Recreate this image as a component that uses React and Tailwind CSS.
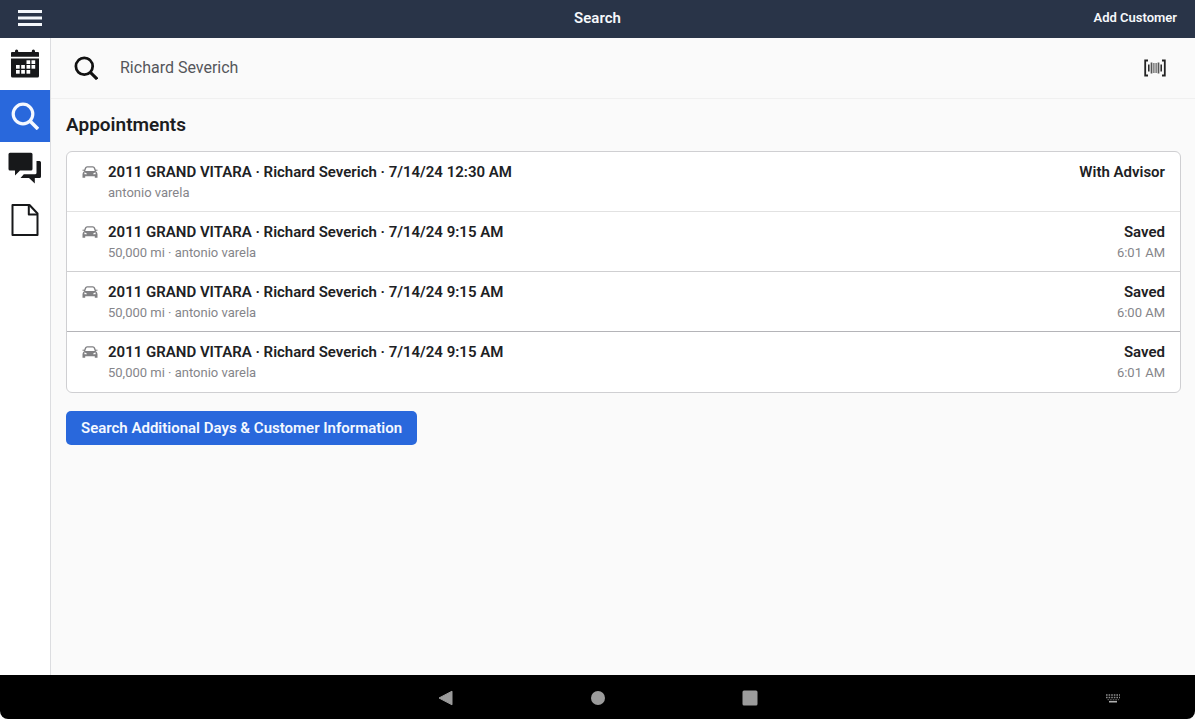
const APPOINTMENTS = [
  { id: 1, title: '2011 GRAND VITARA · Richard Severich · 7/14/24 12:30 AM', detail: 'antonio varela', status: 'With Advisor', time: '', line: 'border-[#e2e2e2]' },
  { id: 2, title: '2011 GRAND VITARA · Richard Severich · 7/14/24 9:15 AM', detail: '50,000 mi · antonio varela', status: 'Saved', time: '6:01 AM', line: 'border-[#cfcfd1]' },
  { id: 3, title: '2011 GRAND VITARA · Richard Severich · 7/14/24 9:15 AM', detail: '50,000 mi · antonio varela', status: 'Saved', time: '6:00 AM', line: 'border-[#b4b4b8]' },
  { id: 4, title: '2011 GRAND VITARA · Richard Severich · 7/14/24 9:15 AM', detail: '50,000 mi · antonio varela', status: 'Saved', time: '6:01 AM', line: 'border-transparent' },
];

function MenuIcon() {
  return (
    <svg viewBox="0 0 24 18" className="h-[18px] w-6" fill="#f4f7fb" aria-hidden="true">
      <rect x="0" y="1" width="24" height="3" />
      <rect x="0" y="7.5" width="24" height="3" />
      <rect x="0" y="14" width="24" height="3" />
    </svg>
  );
}

function CalendarIcon() {
  return (
    <svg viewBox="0 0 30 30" className="size-[30px]" fill="#17181a" aria-hidden="true">
      <path d="M2 3H5V2.2a1.600 1.600 0 0 1 3.200 0V3H21.800V2.200a1.600 1.600 0 0 1 3.200 0V3H28A1 1 0 0 1 29 4V7.800H1V4A1 1 0 0 1 2 3Z" />
      <path d="M1 9.500H29V27a1.500 1.500 0 0 1-1.500 1.500h-25A1.500 1.500 0 0 1 1 27Z" />
      <g fill="#fff">
        <rect x="16.500" y="11.300" width="3.700" height="3.700" />
        <rect x="21.500" y="11.300" width="3.700" height="3.700" />
        <rect x="6" y="16" width="3.700" height="3.700" />
        <rect x="11.200" y="16" width="3.700" height="3.700" />
        <rect x="16.500" y="16" width="3.700" height="3.700" />
        <rect x="21.500" y="16" width="3.700" height="3.700" />
        <rect x="6" y="21" width="3.700" height="3.700" />
        <rect x="11.200" y="21" width="3.700" height="3.700" />
        <rect x="16.500" y="21" width="3.700" height="3.700" />
      </g>
    </svg>
  );
}

function SearchIcon({ className }) {
  return (
    <svg viewBox="0 0 28 28" className={className} fill="none" stroke="currentColor" strokeWidth="3.200" aria-hidden="true">
      <circle cx="12" cy="12" r="9.800" />
      <path d="M18.500 18.500L27 27" strokeWidth="3.600" />
    </svg>
  );
}

function ChatIcon() {
  return (
    <svg viewBox="0 0 34 32" className="h-8 w-[34px]" fill="#17181a" aria-hidden="true">
      <path d="M2 0.800H23A1.500 1.500 0 0 1 24.500 2.300V17A1.500 1.500 0 0 1 23 18.500H12L7 23.500V18.500H2A1.500 1.500 0 0 1 .500 17V2.300A1.500 1.500 0 0 1 2 .800Z" />
      <path d="M28.500 9H31.500A1.500 1.500 0 0 1 33 10.500V24.500A1.500 1.500 0 0 1 31.500 26H26.800V31.500L21 26H12.500L15.800 22.300H27A1.500 1.500 0 0 0 28.500 20.800Z" />
    </svg>
  );
}

function DocumentIcon() {
  return (
    <svg viewBox="0 0 28 32" className="h-8 w-7" fill="none" stroke="#17181a" strokeWidth="2" strokeLinejoin="round" aria-hidden="true">
      <path d="M1.500 1H18.500L26.500 9.500V31H1.500Z" />
      <path d="M17.800 1V10.500H26.500" />
    </svg>
  );
}

function CarIcon() {
  return (
    <svg viewBox="0 0 16 14" className="h-3.5 w-4 shrink-0" fill="#808083" aria-hidden="true">
      <path d="M2.300 6.500L3.600 3Q4 1.900 5.200 1.900H10.800Q12 1.900 12.400 3L13.700 6.500" fill="none" stroke="#808083" strokeWidth="1.400" />
      <path d="M0.500 5.200H2.500M13.500 5.200H15.500" stroke="#808083" strokeWidth="1" />
      <path fillRule="evenodd" d="M2.800 6H13.200Q15.500 7 15.500 9V12.800H12.800V11.300H3.200V12.800H0.500V9Q0.500 7 2.800 6ZM2.400 7.600V9.200H5L4.200 8ZM13.600 7.600V9.200H11L11.800 8Z" />
    </svg>
  );
}

function BarcodeIcon() {
  return (
    <svg viewBox="0 0 22 18" className="h-[18px] w-[22px]" fill="none" stroke="#242424" aria-hidden="true">
      <path d="M4 1.500H1.200V16.500H4M18 1.500H20.800V16.500H18" strokeWidth="1.800" />
      <path d="M4.800 5.500V12.500M17.200 5.500V12.500" strokeWidth="1.500" />
      <path d="M7.500 3.500V14.500M14.500 3.500V14.500" strokeWidth="1.700" stroke="#555" />
      <path d="M9.800 4V14M12.200 4V14" strokeWidth="1.800" stroke="#8a8a8a" />
    </svg>
  );
}

function KeyboardIcon() {
  return (
    <svg viewBox="0 0 16 12" className="h-3 w-4" fill="none" stroke="#8c8c8c" aria-hidden="true">
      <path d="M1 3H15M1 5.500H15" strokeWidth="1.400" strokeDasharray="1.600 1" />
      <path d="M2.500 7.700H14" strokeWidth="1" strokeDasharray="1.600 1" stroke="#666" />
      <path d="M4 9.700H12" strokeWidth="1.600" stroke="#b0b0b0" />
    </svg>
  );
}

function SideButton({ label, active, children }) {
  return (
    <button
      type="button"
      aria-label={label}
      className={`flex h-[52px] w-full items-center justify-center ${active ? 'bg-[#2968dc] text-[#f4f8ff]' : ''}`}
    >
      {children}
    </button>
  );
}

function AppointmentRow({ item }) {
  return (
    <li className={`flex items-start gap-2.5 border-b pt-2.5 pr-[15px] pb-2 pl-[15px] ${item.line}`}>
      <span className="flex h-5 items-center">
        <CarIcon />
      </span>
      <div className="flex min-w-0 grow flex-col gap-px leading-5">
        <p className="text-[15px] font-semibold text-[#202124]">{item.title}</p>
        <p className="text-[13px] text-[#85858a]">{item.detail}</p>
      </div>
      <div className="flex flex-col gap-px text-right leading-5">
        <p className="text-[15px] font-semibold text-[#202124]">{item.status}</p>
        <p className="text-[13px] text-[#85858a]">{item.time}</p>
      </div>
    </li>
  );
}

export default function App() {
  return (
    <div className="flex min-h-screen flex-col bg-[#fafafa] font-['Roboto',sans-serif]">
      <header className="grid h-[38px] grid-cols-3 items-center bg-[#293448] px-[18px] pb-0.5 text-[#f6f8fb]">
        <button type="button" aria-label="Menu" className="justify-self-start">
          <MenuIcon />
        </button>
        <h1 className="text-center text-[15px] font-semibold">Search</h1>
        <button type="button" className="justify-self-end text-[13px] font-semibold">Add Customer</button>
      </header>

      <div className="flex grow">
        <nav className="w-[51px] shrink-0 border-r border-[#dcdde0] bg-white">
          <SideButton label="Calendar"><CalendarIcon /></SideButton>
          <SideButton label="Search" active><SearchIcon className="size-7" /></SideButton>
          <SideButton label="Messages"><ChatIcon /></SideButton>
          <SideButton label="Documents"><DocumentIcon /></SideButton>
        </nav>

        <main className="min-w-0 grow">
          <div className="flex h-[61px] items-center gap-[22px] border-b border-[#f0f0f0] pr-[29px] pl-[23px]">
            <SearchIcon className="size-6 shrink-0 text-[#111]" />
            <input
              type="text"
              aria-label="Search customers"
              defaultValue="Richard Severich"
              className="min-w-0 grow bg-transparent text-base text-[#55565a] outline-none"
            />
            <button type="button" aria-label="Scan barcode">
              <BarcodeIcon />
            </button>
          </div>

          <section className="pt-3 pr-3.5 pl-[15px]">
            <h2 className="text-[19px] leading-7 font-semibold text-[#1c1d1f]">Appointments</h2>
            <ul className="mt-3 rounded-md border border-[#cfcfd2] bg-white">
              {APPOINTMENTS.map((item) => (
                <AppointmentRow key={item.id} item={item} />
              ))}
            </ul>
            <button type="button" className="mt-[18px] h-[34px] rounded-[5px] bg-[#2968dc] px-[15px] text-[15px] font-semibold text-[#f4f8ff]">
              Search Additional Days &amp; Customer Information
            </button>
          </section>
        </main>
      </div>

      <footer className="grid h-11 grid-cols-[1fr_auto_1fr] items-center rounded-b-lg bg-black pt-0.5">
        <span />
        <div className="flex items-center gap-[136px]">
          <button type="button" aria-label="Back">
            <svg viewBox="0 0 16 16" className="size-4" fill="#9b9b9b" aria-hidden="true"><path d="M14 1.200V14.800L1 8Z" stroke="#9b9b9b" strokeLinejoin="round" /></svg>
          </button>
          <button type="button" aria-label="Home">
            <svg viewBox="0 0 16 16" className="size-4" fill="#9b9b9b" aria-hidden="true"><circle cx="8" cy="8" r="7" /></svg>
          </button>
          <button type="button" aria-label="Recent apps">
            <svg viewBox="0 0 16 16" className="size-4" fill="#9b9b9b" aria-hidden="true"><rect x="0.500" y="0.500" width="15" height="15" rx="1.500" /></svg>
          </button>
        </div>
        <button type="button" aria-label="Keyboard" className="mr-[74px] justify-self-end">
          <KeyboardIcon />
        </button>
      </footer>
    </div>
  );
}
